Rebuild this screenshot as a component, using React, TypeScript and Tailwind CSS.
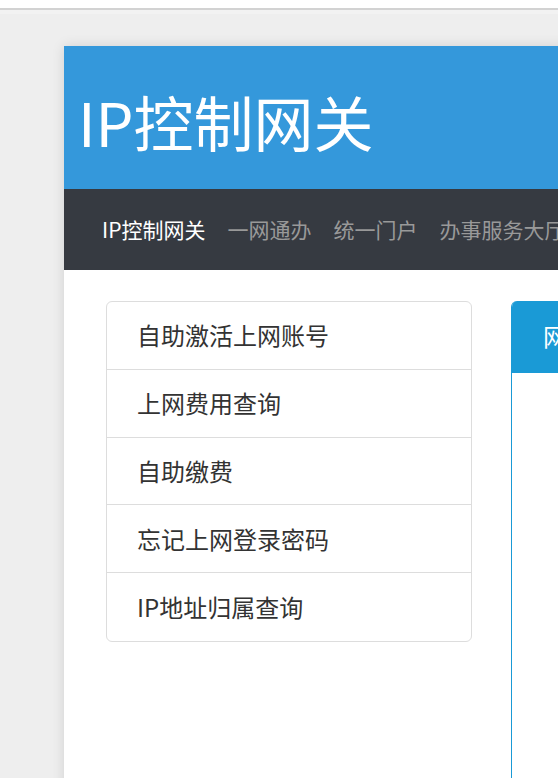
import React from "react";

const items = ["自助激活上网账号", "上网费用查询", "自助缴费", "忘记上网登录密码", "IP地址归属查询"];
const nav = ["一网通办", "统一门户", "办事服务大厅", "信息公开"];

export default function App() {
  return (
    <div
      className="w-[558px] h-[778px] overflow-hidden bg-[#eeeeee]"
      style={{ fontFamily: '"Noto Sans CJK SC", "Noto Sans", sans-serif' }}
    >
      <div className="h-[8px] bg-white" />
      <div className="h-[2px] bg-[#d2d2d2]" />
      <div className="h-[4px] bg-[#f2f2f2]" />
      <div className="pl-[64px] pt-[32px]">
        <div className="w-[1100px] h-[900px] bg-white shadow-[0_0_12px_rgba(0,0,0,0.12)]">
          <div className="h-[143px] bg-[#3498db] flex items-center pl-[14px] pt-[6px]">
            <h1 className="text-[60px] leading-none text-white font-normal whitespace-nowrap">IP控制网关</h1>
          </div>
          <div className="h-[81px] bg-[#363a41] flex items-center pl-[38px] gap-[22px] whitespace-nowrap text-[21px]">
            <span className="text-white">IP控制网关</span>
            {nav.map((n) => (
              <span key={n} className="text-[#999999]">{n}</span>
            ))}
          </div>
          <div className="flex pt-[31px] pl-[42px]">
            <div className="w-[366px] h-[341px] border border-[#dddddd] rounded-[6px] flex flex-col">
              {items.map((t, i) => (
                <div
                  key={t}
                  className={
                    "h-[68px] flex items-center pl-[30px] text-[24px] text-[#333333] " +
                    (i < items.length - 1 ? "border-b border-[#dddddd]" : "")
                  }
                >
                  {t}
                </div>
              ))}
            </div>
            <div className="ml-[39px] w-[500px] h-[600px] border-l border-[#1a9ad6] rounded-tl-[6px] overflow-hidden">
              <div className="h-[72px] bg-[#1a9ad6] flex items-center pl-[31px] pb-[2px] text-[24px] text-white whitespace-nowrap">
                网络服务
              </div>
            </div>
          </div>
        </div>
      </div>
    </div>
  );
}
